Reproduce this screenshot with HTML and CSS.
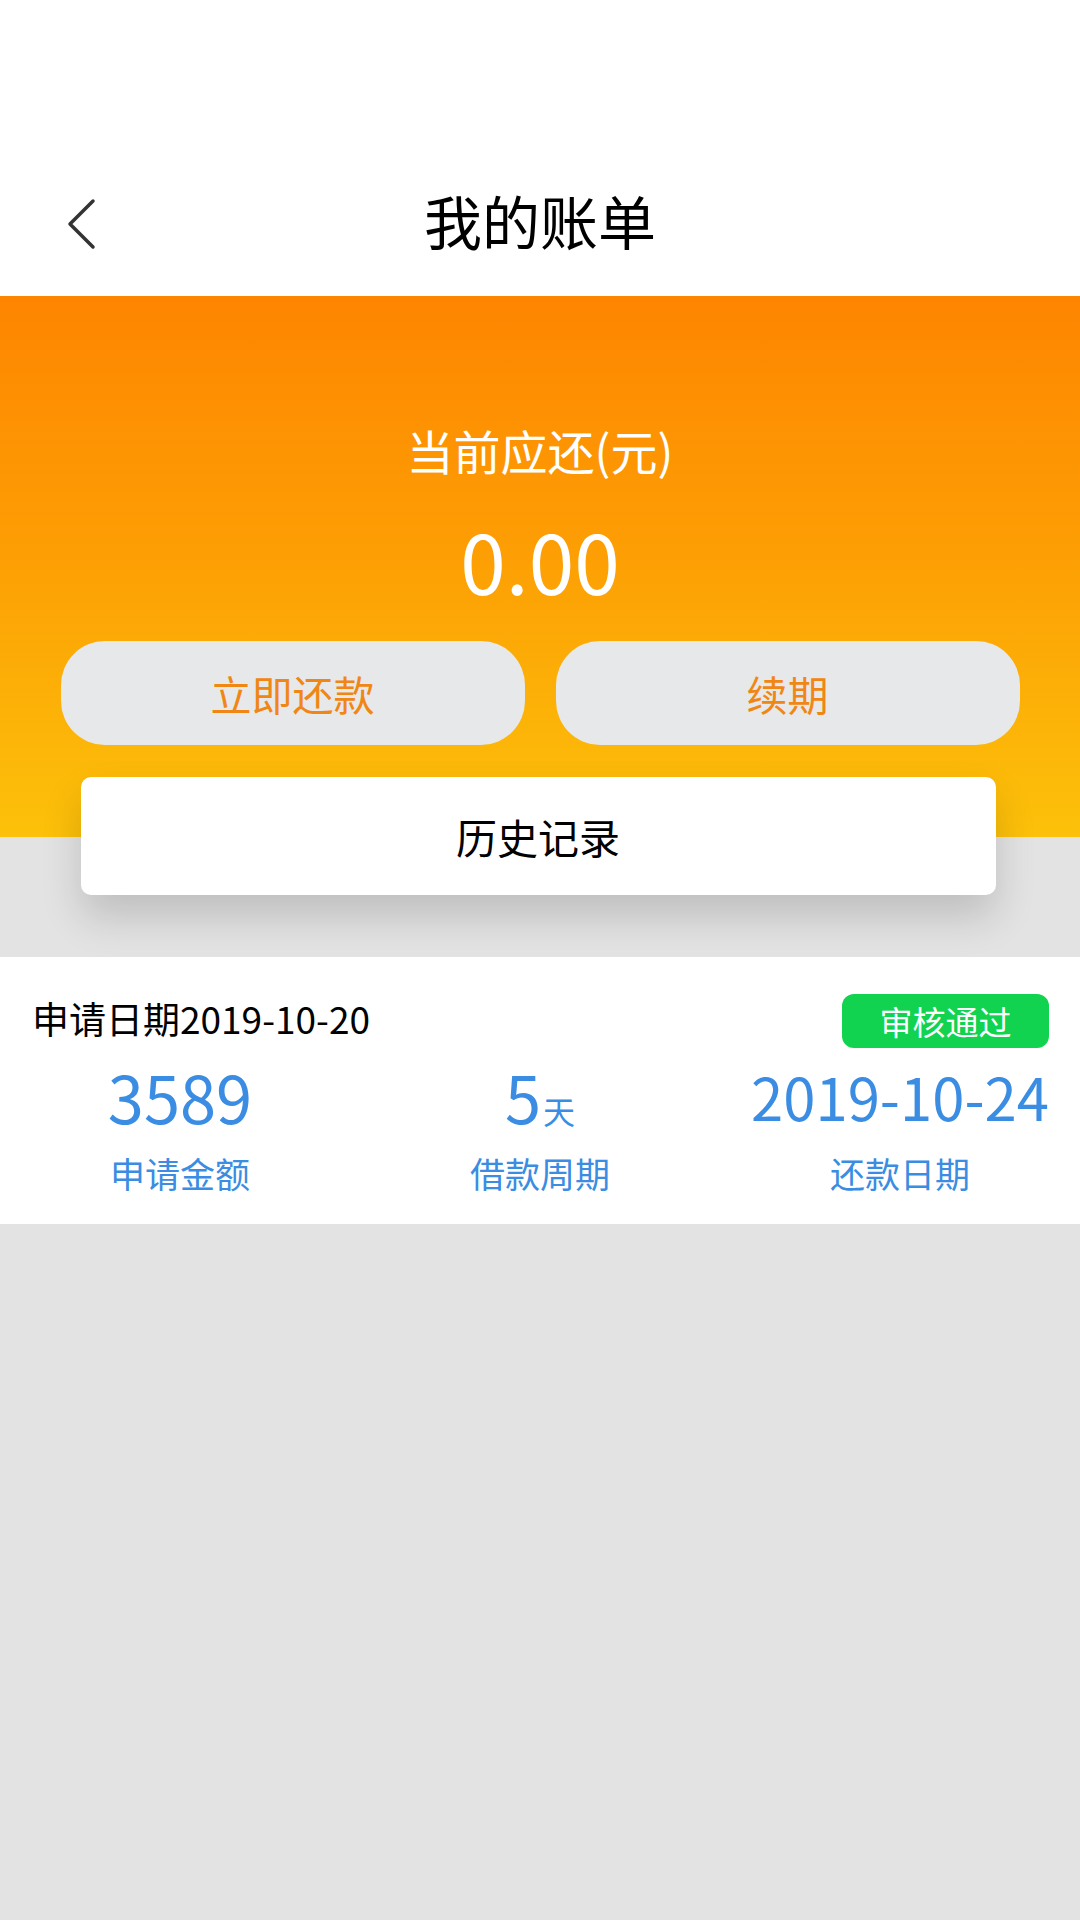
FILE: index.html
```html
<!DOCTYPE html>
<html lang="zh-CN">
<head>
    <meta charset="UTF-8">
    <meta name="viewport" content="width=device-width, initial-scale=1.0">
    <title>我的账单</title>
    <link rel="stylesheet" href="styles.css">
</head>
<body>
    <div class="header">
        <div class="nav">
            <a class="back" href="#">
                <svg width="40" height="60" viewBox="0 0 40 60">
                    <path d="M32 9 L9 32 L32 55" fill="none" stroke="#333" stroke-width="3.5" stroke-linecap="round" stroke-linejoin="round"/>
                </svg>
            </a>
            <h1>我的账单</h1>
        </div>
    </div>

    <div class="hero">
        <p class="hero-label">当前应还(元)</p>
        <p class="hero-amount">0.00</p>
        <div class="actions">
            <button class="action-btn">立即还款</button>
            <button class="action-btn">续期</button>
        </div>
        <div class="history">历史记录</div>
    </div>

    <div class="bill">
        <div class="bill-top">
            <span class="bill-date">申请日期2019-10-20</span>
            <span class="badge">审核通过</span>
        </div>
        <div class="bill-stats">
            <div class="stat">
                <div class="stat-value">3589</div>
                <div class="stat-label">申请金额</div>
            </div>
            <div class="stat">
                <div class="stat-value">5<span class="unit">天</span></div>
                <div class="stat-label">借款周期</div>
            </div>
            <div class="stat">
                <div class="stat-value date">2019-10-24</div>
                <div class="stat-label">还款日期</div>
            </div>
        </div>
    </div>
</body>
</html>
```

FILE: styles.css
```css
body {
    margin: 0;
    width: 1080px;
    min-height: 1920px;
    background-color: #e3e3e3;
    font-family: "Noto Sans CJK SC", "Noto Sans", sans-serif;
    color: #000;
}

p {
    margin: 0;
}

.header {
    background-color: #fff;
    padding-top: 148px;
}

.nav {
    position: relative;
    height: 148px;
    display: flex;
    align-items: center;
    justify-content: center;
}

.back {
    position: absolute;
    left: 61px;
    top: 44px;
    display: block;
    width: 40px;
    height: 60px;
}

.nav h1 {
    margin: 0 0 4px;
    font-size: 58px;
    font-weight: 400;
    line-height: 144px;
}

.hero {
    display: flex;
    flex-direction: column;
    align-items: center;
    padding-top: 122px;
    background: linear-gradient(to bottom, #fe8500 0%, #fd9d04 45%, #fcc10a 100%);
}

.hero-label {
    color: #fff;
    font-size: 47px;
    line-height: 64px;
}

.hero-amount {
    margin-top: 30px;
    color: #fff;
    font-size: 82px;
    font-weight: 400;
    line-height: 96px;
}

.actions {
    margin-top: 33px;
    display: flex;
    gap: 31px;
}

.action-btn {
    width: 464px;
    height: 104px;
    border: none;
    border-radius: 44px;
    background-color: #e7e8e9;
    color: #f08614;
    font-family: inherit;
    font-size: 41px;
}

.history {
    margin-top: 32px;
    margin-bottom: -58px;
    margin-right: 4px;
    width: 915px;
    height: 118px;
    border-radius: 10px;
    background-color: #fff;
    box-shadow: 0 22px 40px rgba(0, 0, 0, 0.16);
    display: flex;
    align-items: center;
    justify-content: center;
    font-size: 41px;
}

.bill {
    margin-top: 120px;
    background-color: #fff;
    padding: 37px 0 29px;
}

.bill-top {
    display: flex;
    align-items: center;
    justify-content: space-between;
    padding: 0 31px 0 32px;
}

.bill-date {
    font-size: 37px;
    line-height: 54px;
    margin-top: -6px;
}

.badge {
    width: 207px;
    height: 54px;
    border-radius: 12px;
    background-color: #11d34f;
    color: #fff;
    font-size: 33px;
    line-height: 54px;
    text-align: center;
}

.bill-stats {
    margin-top: 13px;
    display: grid;
    grid-template-columns: 1fr 1fr 1fr;
}

.stat {
    text-align: center;
    color: #3a8de2;
}

.stat-value {
    height: 70px;
    font-size: 65px;
    line-height: 70px;
}

.stat-value.date {
    font-size: 58px;
}

.unit {
    font-size: 32px;
    line-height: 1;
    margin-left: 2px;
}

.stat-label {
    margin-top: 20px;
    font-size: 35px;
    line-height: 44px;
}
```
